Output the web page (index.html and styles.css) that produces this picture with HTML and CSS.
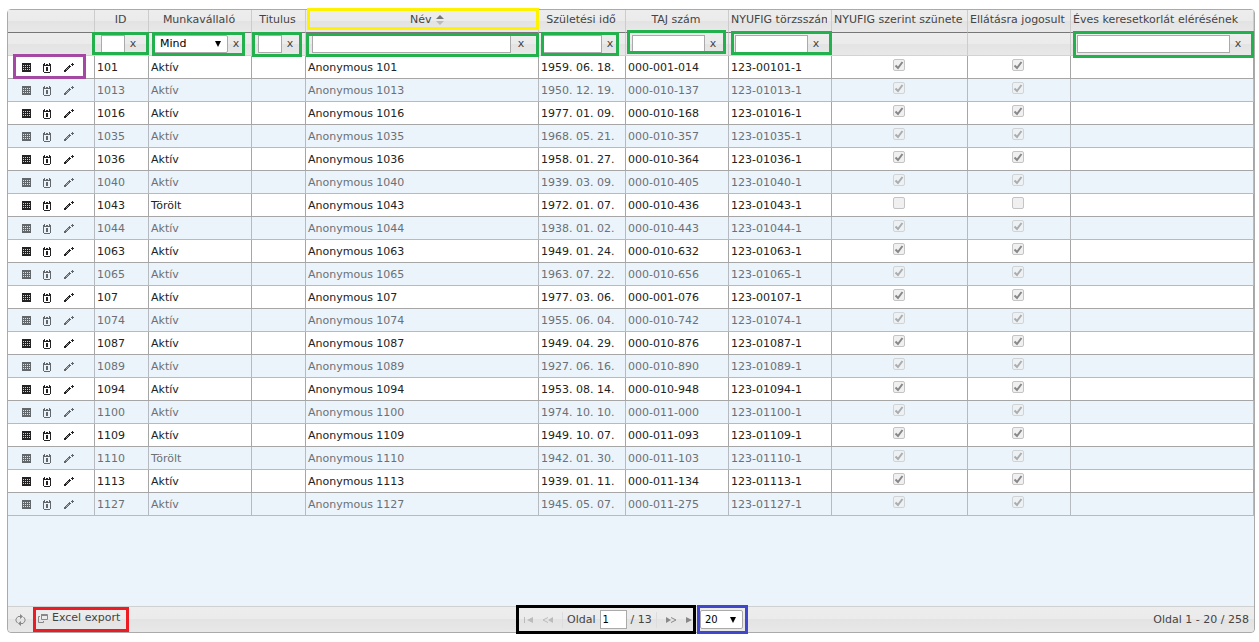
FILE: index.html
```html
<!DOCTYPE html>
<html lang="hu">
<head>
<meta charset="utf-8">
<title>Munkavállalók</title>
<link rel="stylesheet" href="styles.css">
</head>
<body>
<svg class="sprite" aria-hidden="true">
  <symbol id="i-grid" viewBox="0 0 10 10"><g shape-rendering="crispEdges"><rect width="9" height="9" rx="1" fill="currentColor"/><path fill="#fff" opacity=".8" d="M1 2h1v1H1zM3 2h1v1H3zM5 2h1v1H5zM7 2h1v1H7zM1 4h1v1H1zM3 4h1v1H3zM5 4h1v1H5zM7 4h1v1H7zM1 6h1v1H1zM3 6h1v1H3zM5 6h1v1H5zM7 6h1v1H7z"/></g></symbol>
  <symbol id="i-calendar" viewBox="0 0 10 10"><path shape-rendering="crispEdges" fill="currentColor" d="M1 0h1v1h4V0h1v1h1v8H7v1H1V9H0V1h1zM1 3v6h6V3zM2 1v1h1V1zM5 1v1h1V1zM3 4h2v4H3z" fill-rule="evenodd"/></symbol>
  <symbol id="i-pencil" viewBox="0 0 10 10"><g shape-rendering="crispEdges"><path fill="currentColor" d="M0 9V7h1V6h1V5h1V4h1V3h1V2h1v1h1v1H6v1H5v1H4v1H3v1H2v1zM8 0h1v1h1v1H9v1H8V2H7V1h1z"/><path fill="#fff" opacity=".45" d="M2 6h1v1H2zM3 5h1v1H3zM4 4h1v1H4z"/></g></symbol>
</svg>
<main class="grid">
  <div class="grid-body">
    <table>
      <colgroup>
        <col class="c-actions"><col class="c-id"><col class="c-status"><col class="c-title"><col class="c-name"><col class="c-birth"><col class="c-taj"><col class="c-reg"><col class="c-pause"><col class="c-right"><col class="c-limit">
      </colgroup>
      <thead>
        <tr class="heads">
          <td></td>
          <th scope="col"><div>ID</div></th>
          <th scope="col"><div>Munkavállaló</div></th>
          <th scope="col"><div>Titulus</div></th>
          <th scope="col" aria-sort="ascending"><div class="sorted">Név <svg class="sort" viewBox="0 0 8 10" aria-hidden="true"><path fill="#777" d="M4 0l4 4H0z"/><path fill="#bbb" d="M0 6h8l-4 4z"/></svg></div><span class="mark mark-name-head"></span></th>
          <th scope="col"><div>Születési idő</div></th>
          <th scope="col"><div>TAJ szám</div></th>
          <th scope="col"><div class="long">NYUFIG törzsszám</div></th>
          <th scope="col"><div class="long">NYUFIG szerint szünetel</div></th>
          <th scope="col"><div class="long">Ellátásra jogosult</div></th>
          <th scope="col"><div class="long">Éves keresetkorlát elérésének</div></th>
        </tr>
        <tr class="filters">
          <td></td>
          <td><div class="filter"><input type="text" aria-label="ID"><button type="button">x</button></div><span class="mark mark-id"></span></td>
          <td><div class="filter filter-status"><select aria-label="Munkavállaló"><option>Mind</option><option>Aktív</option><option>Törölt</option></select><button type="button">x</button></div><span class="mark mark-status"></span></td>
          <td><div class="filter"><input type="text" aria-label="Titulus"><button type="button">x</button></div><span class="mark mark-title"></span></td>
          <td><div class="filter filter-name"><input type="text" aria-label="Név"><button type="button">x</button></div><span class="mark mark-name"></span></td>
          <td><div class="filter filter-birth"><input type="text" aria-label="Születési idő"><button type="button">x</button></div><span class="mark mark-birth"></span></td>
          <td><div class="filter"><input type="text" aria-label="TAJ szám"><button type="button">x</button></div><span class="mark mark-taj"></span></td>
          <td><div class="filter"><input type="text" aria-label="NYUFIG törzsszám"><button type="button">x</button></div><span class="mark mark-reg"></span></td>
          <td></td>
          <td></td>
          <td><div class="filter"><input type="text" aria-label="Éves keresetkorlát elérésének"><button type="button">x</button></div><span class="mark mark-limit"></span></td>
        </tr>
      </thead>
      <tbody id="rows"></tbody>
    </table>
  </div>
  <footer class="pager">
    <div class="pager-left">
      <button type="button" aria-label="Frissítés"><svg width="11" height="12" viewBox="0 0 11 12"><path fill="none" stroke="#888" d="M5 2.500H3L1 5v2l1.500 2M6 9.500h2L10 7V5L8.500 3"/><path fill="#888" d="M5 0l3 2.500L5 5zM6 7v5L3 9.500z"/></svg></button>
      <button type="button" class="export"><svg width="10" height="9" viewBox="0 0 10 9" fill="none" stroke="#888"><path d="M3 .5h6.500v5H3.500V0M3 1.500h7M2 2.500H.5v6h5V7"/></svg>Excel export<span class="mark mark-export"></span></button>
    </div>
    <div class="pager-center">
      <div class="pages">
        <button type="button" disabled aria-label="Első oldal"><svg width="10" height="6" viewBox="0 0 10 6" fill="#bbb"><path d="M0 0h1v6H0zM9 0v6L3 3z"/></svg></button>
        <button type="button" disabled aria-label="Előző oldal"><svg width="12" height="6" viewBox="0 0 12 6"><path fill="#bbb" d="M11 0v6L6 3z"/><path fill="none" stroke="#bbb" d="M6 .5L1 3l5 2.500"/></svg></button>
        <span class="sep"></span>
        <label class="page-label">Oldal <input type="text" value="1"></label>
        <span class="total">/ 13</span>
        <span class="sep"></span>
        <button type="button" aria-label="Következő oldal"><svg width="12" height="6" viewBox="0 0 12 6"><path fill="#888" d="M1 0v6l5-3z"/><path fill="none" stroke="#888" d="M6 .5L11 3 6 5.500"/></svg></button>
        <button type="button" class="last" aria-label="Utolsó oldal"><svg width="10" height="6" viewBox="0 0 10 6" fill="#888"><path d="M1 0v6l6-3zM8 0h1v6H8z"/></svg></button>
        <span class="mark mark-pages"></span>
      </div>
      <div class="size"><select aria-label="Sorok száma"><option>20</option><option>50</option><option>100</option></select><span class="mark mark-size"></span></div>
    </div>
    <div class="pager-right">Oldal 1 - 20 / 258</div>
  </footer>
</main>
<script src="script.js"></script>
</body>
</html>
```
FILE: styles.css
```css
* { box-sizing: border-box; }
body {
  margin: 0;
  padding: 9px 4px 9px 7px;
  background: #fff;
  color: #222;
  font: 11px/16px "DejaVu Sans", Verdana, sans-serif;
}
input, select, button { font: inherit; color: inherit; margin: 0; }
button { border: 0; padding: 0; background: none; }
.sprite { position: absolute; width: 0; height: 0; }

.grid {
  display: flex;
  flex-direction: column;
  min-height: calc(100vh - 18px);
  border: 1px solid #aaa;
  border-radius: 4px;
  background: #ebf4fb;
}
.grid-body { flex: 1; }
table { width: 100%; table-layout: fixed; border-collapse: separate; border-spacing: 0; }
.c-actions { width: 87px; }
.c-id, .c-title { width: 54px; }
.c-status, .c-taj, .c-reg, .c-right { width: 103px; }
.c-birth { width: 87px; }
.c-pause { width: 136px; }
.c-limit { width: 183px; }

th, td {
  position: relative;
  height: 23px;
  padding: 0 2px;
  border: 0 solid #a6a6a6;
  border-width: 0 1px 1px 0;
  font-weight: normal;
  text-align: left;
  white-space: nowrap;
}
thead th, thead td {
  background: linear-gradient(#ededed, #ebebeb 50%, #e3e3e3 50%, #e8e8e8);
  border-right-color: #ccc;
  color: #444;
}
.heads th, .heads td { border-bottom-color: #777; }
.heads th div { overflow: hidden; margin-right: 2px; height: 18px; line-height: 16px; text-align: center; }
.heads th .long { text-align: left; }
.heads th .sorted { padding-left: 12px; }
.sort { width: 8px; height: 10px; margin-left: 1px; vertical-align: -2px; }
.filters td { padding: 0; border-bottom-color: #d3d3d3; }

.filter { display: flex; align-items: center; padding: 0 7px 0 6px; }
.filter input, .filter select {
  flex: 1;
  min-width: 0;
  width: 100%;
  height: 18px;
  border: 1px solid #aaa;
  padding: 0 4px;
  background-color: #fff;
}
.filter button { width: 16px; line-height: 16px; text-align: center; }
.filter-status, .filter-birth { padding-left: 4px; }
.filter-name { padding-right: 7px; }
.filter-name button { width: 20px; }
select {
  appearance: none;
  border: 1px solid #aaa;
  border-radius: 2px;
  background: #fff url("data:image/svg+xml,%3Csvg xmlns='http://www.w3.org/2000/svg' width='6' height='6'%3E%3Cpath d='M0 0h6L3 6z'/%3E%3C/svg%3E") no-repeat right 6px center;
}
.filter select { padding-left: 6px; color: #000; line-height: 16px; }

tbody td { padding-top: 2px; background: #fff; }
tbody tr:nth-child(even) td {
  background: #ebf4fb;
  border-color: #b5bbc0;
  color: #6b7075;
}
tbody td.actions { padding: 2px 0 0 14px; }
.action-list { display: flex; gap: 11px; }
.action-list button { display: block; width: 10px; height: 10px; color: #222; }
tbody tr:nth-child(even) button { color: #62676b; }
.action-list svg { display: block; width: 10px; height: 10px; }
tbody td.check { padding: 0 3px 1px 1px; text-align: center; line-height: 12px; }
td.check input {
  appearance: none;
  width: 12px;
  height: 12px;
  margin: 0 0 3px;
  border: 1px solid #c4c4c4;
  border-radius: 2px;
  background: #f0f0f0 center no-repeat;
  vertical-align: middle;
}
td.check input:checked {
  background-image: url("data:image/svg+xml,%3Csvg xmlns='http://www.w3.org/2000/svg' width='10' height='10'%3E%3Cpath d='M1.500 5.500L4 8 8.500 2' fill='none' stroke='%23888' stroke-width='2'/%3E%3C/svg%3E");
}
tbody tr:nth-child(even) td.check input { opacity: .65; }

.pager {
  display: grid;
  grid-template-columns: 1fr auto 1fr;
  align-items: center;
  min-height: 26px;
  border-top: 1px solid #d0d0d0;
  border-radius: 0 0 4px 4px;
  background: linear-gradient(#ededed, #ebebeb 50%, #e3e3e3 50%, #e8e8e8);
  color: #444;
}
.pager svg { display: block; }
.pager-left { display: flex; align-items: center; gap: 12px; padding-left: 7px; }
.export { position: relative; display: flex; align-items: center; gap: 4px; padding-bottom: 3px; }
.pager-center { display: flex; align-items: center; gap: 1px; padding-left: 2px; }
.pages, .size { position: relative; display: flex; align-items: center; height: 25px; }
.pages { gap: 8px; width: 180px; padding-left: 8px; }
.pages button { flex: none; }
.sep { width: 1px; height: 16px; background: #ddd; }
.page-label { display: flex; align-items: center; gap: 4px; margin-left: -4px; }
.page-label input { width: 27px; height: 19px; border: 1px solid #aaa; padding: 0 2px; background: #fff; color: #000; font-size: 10px; }
.total { margin: 0 -4px; }
.size { width: 51px; padding: 0 5px 0 3px; }
.size select { width: 100%; height: 19px; padding: 0 4px; color: #000; font-size: 10px; line-height: 16px; }
.pager-right { padding-right: 5px; text-align: right; }

/* Coloured frames drawn over the regions they highlight */
.mark { position: absolute; z-index: 1; border: 3px solid #22b14c; pointer-events: none; }
.mark-name-head { inset: -2px -1px 2px 1px; border-color: #fff200; }
.mark-id { inset: -1px -1px 0 -3px; }
.mark-status { inset: -1px 6px -1px 3px; }
.mark-title { inset: -1px 3px -2px 0; }
.mark-name { inset: 0 -1px -2px 0; }
.mark-birth { inset: -1px 6px -1px 2px; }
.mark-taj { inset: -3px 2px 1px 1px; }
.mark-reg { inset: -2px -1px 0 2px; }
.mark-limit { inset: -2px -1px -3px 2px; }
.mark-actions { inset: -2px 8px -1px 5px; border-color: #a349a4; }
.mark-export { inset: -3px -9px -3px -5px; border-color: #ed1c24; }
.mark-pages { inset: -2px 0; border-color: #000; }
.mark-size { inset: -2px 0; border-color: #3f48cc; }
```
FILE: script.js
```js
const people = [
  ["101", "Aktív", "1959. 06. 18.", "000-001-014"],
  ["1013", "Aktív", "1950. 12. 19.", "000-010-137"],
  ["1016", "Aktív", "1977. 01. 09.", "000-010-168"],
  ["1035", "Aktív", "1968. 05. 21.", "000-010-357"],
  ["1036", "Aktív", "1958. 01. 27.", "000-010-364"],
  ["1040", "Aktív", "1939. 03. 09.", "000-010-405"],
  ["1043", "Törölt", "1972. 01. 07.", "000-010-436", false],
  ["1044", "Aktív", "1938. 01. 02.", "000-010-443"],
  ["1063", "Aktív", "1949. 01. 24.", "000-010-632"],
  ["1065", "Aktív", "1963. 07. 22.", "000-010-656"],
  ["107", "Aktív", "1977. 03. 06.", "000-001-076"],
  ["1074", "Aktív", "1955. 06. 04.", "000-010-742"],
  ["1087", "Aktív", "1949. 04. 29.", "000-010-876"],
  ["1089", "Aktív", "1927. 06. 16.", "000-010-890"],
  ["1094", "Aktív", "1953. 08. 14.", "000-010-948"],
  ["1100", "Aktív", "1974. 10. 10.", "000-011-000"],
  ["1109", "Aktív", "1949. 10. 07.", "000-011-093"],
  ["1110", "Törölt", "1942. 01. 30.", "000-011-103"],
  ["1113", "Aktív", "1939. 01. 11.", "000-011-134"],
  ["1127", "Aktív", "1945. 05. 07.", "000-011-275"]
];
const action = (icon, label) =>
  `<button type="button" aria-label="${label}"><svg><use href="#${icon}"/></svg></button>`;
const check = (on, label) =>
  `<td class="check"><input type="checkbox" disabled aria-label="${label}"${on ? " checked" : ""}></td>`;

document.getElementById("rows").innerHTML = people.map(([id, status, birth, taj, on = true], i) => `
  <tr>
    <td class="actions"><div class="action-list">${action("i-grid", "Táblázat")}${action("i-calendar", "Naptár")}${action("i-pencil", "Szerkesztés")}</div>${i === 0 ? '<span class="mark mark-actions"></span>' : ""}</td>
    <td>${id}</td>
    <td>${status}</td>
    <td></td>
    <td>Anonymous ${id}</td>
    <td>${birth}</td>
    <td>${taj}</td>
    <td>123-${id.padStart(5, "0")}-1</td>
    ${check(on, "NYUFIG szerint szünetel")}
    ${check(on, "Ellátásra jogosult")}
    <td></td>
  </tr>`).join("");
```
